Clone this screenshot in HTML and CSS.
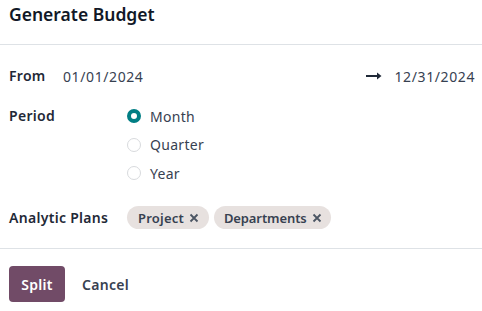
FILE: index.html
```html
<!DOCTYPE html>
<html>
<head>
<meta charset="utf-8">
<link rel="stylesheet" href="styles.css">
</head>
<body>
<div class="modal">
  <div class="header"><h4 class="title">Generate Budget</h4></div>
  <div class="body">
    <div class="row row-from">
      <div class="lbl lbl-from">From</div>
      <div class="val">01/01/2024</div>
      <div class="spacer"></div>
      <svg class="arrow" width="16" height="8" viewBox="0 0 16 8"><path d="M0 4H12" stroke="#1f2937" stroke-width="2"/><path d="M11 0.5L15.5 4L11 7.5Z" fill="#1f2937"/></svg>
      <div class="val val-to">12/31/2024</div>
    </div>
    <div class="row row-period">
      <div class="lbl lbl-col">Period</div>
      <div class="radios">
        <div class="radio"><span class="dot checked"></span><span class="rtxt">Month</span></div>
        <div class="radio"><span class="dot"></span><span class="rtxt">Quarter</span></div>
        <div class="radio"><span class="dot"></span><span class="rtxt">Year</span></div>
      </div>
    </div>
    <div class="row row-plans">
      <div class="lbl lbl-col">Analytic Plans</div>
      <div class="tags">
        <span class="tag">Project<svg class="x" width="10" height="10" viewBox="0 0 10 10"><path d="M1.5 1.5L8.5 8.5M8.5 1.5L1.5 8.5" stroke="#4b5563" stroke-width="1.8"/></svg></span>
        <span class="tag tag-long">Departments<svg class="x" width="10" height="10" viewBox="0 0 10 10"><path d="M1.5 1.5L8.5 8.5M8.5 1.5L1.5 8.5" stroke="#4b5563" stroke-width="1.8"/></svg></span>
      </div>
    </div>
  </div>
  <div class="footer">
    <button class="btn btn-primary">Split</button>
    <button class="btn btn-secondary">Cancel</button>
  </div>
</div>
</body>
</html>
```
FILE: styles.css
```css
html, body {
  margin: 0;
  padding: 0;
  background: #ffffff;
}
body {
  font-family: "Noto Sans", "Open Sans", sans-serif;
  font-size: 14px;
  color: #374151;
  width: 482px;
  height: 311px;
  overflow: hidden;
}
.modal {
  display: flex;
  flex-direction: column;
}
.header {
  height: 44px;
  border-bottom: 1px solid #dee2e6;
  padding: 0 9px;
  box-sizing: content-box;
}
.title {
  margin: 0;
  font-size: 17.5px;
  line-height: 28px;
  font-weight: 600;
  color: #111827;
}
.body {
  padding: 20px 7px 0 9px;
  height: 183px;
}
.row {
  display: flex;
}
.row-from {
  align-items: center;
  height: 22px;
}
.lbl {
  font-weight: 600;
  color: #1f2937;
  line-height: 22px;
  letter-spacing: 0.3px;
}
.lbl-from {
  width: 54px;
}
.lbl-col {
  width: 118px;
}
.val {
  color: #374151;
  font-size: 14px;
  letter-spacing: 0.6px;
}
.spacer {
  flex: 1;
}
.arrow {
  margin-right: 13px;
}
.row-period {
  margin-top: 18px;
}
.radios {
  display: flex;
  flex-direction: column;
}
.radio {
  display: flex;
  align-items: center;
  height: 22px;
  margin-bottom: 6.5px;
}
.radio:last-child {
  margin-bottom: 0;
}
.dot {
  width: 14px;
  height: 14px;
  border-radius: 50%;
  border: 1px solid #d8dadd;
  box-sizing: border-box;
  background: #fff;
  margin-right: 9px;
}
.dot.checked {
  border: 4px solid #017e84;
  background: #fff;
}
.rtxt {
  color: #374151;
  font-size: 14px;
  letter-spacing: 0.3px;
}
.row-plans {
  margin-top: 22px;
  align-items: center;
}
.tags {
  display: flex;
  gap: 5px;
}
.tag {
  display: inline-flex;
  align-items: center;
  height: 23px;
  padding: 0 10px 0 11px;
  border-radius: 12px;
  background: #e7e1df;
  color: #374151;
  font-weight: 600;
  font-size: 13px;
  letter-spacing: 0.2px;
}
.tag-long {
  letter-spacing: -0.1px;
  padding: 0 9px 0 10px;
}
.x {
  margin-left: 5px;
}
.footer {
  border-top: 1px solid #dee2e6;
  padding: 17px 9px 0 9px;
  display: flex;
  align-items: center;
  gap: 6px;
}
.btn {
  font-family: inherit;
  font-size: 14px;
  font-weight: 600;
  letter-spacing: 0.3px;
  border: none;
  border-radius: 4px;
  height: 36px;
  padding: 0 11px;
  cursor: pointer;
}
.btn-primary {
  background: #714b67;
  color: #ffffff;
  width: 56px;
}
.btn-secondary {
  background: transparent;
  color: #374151;
}
```
